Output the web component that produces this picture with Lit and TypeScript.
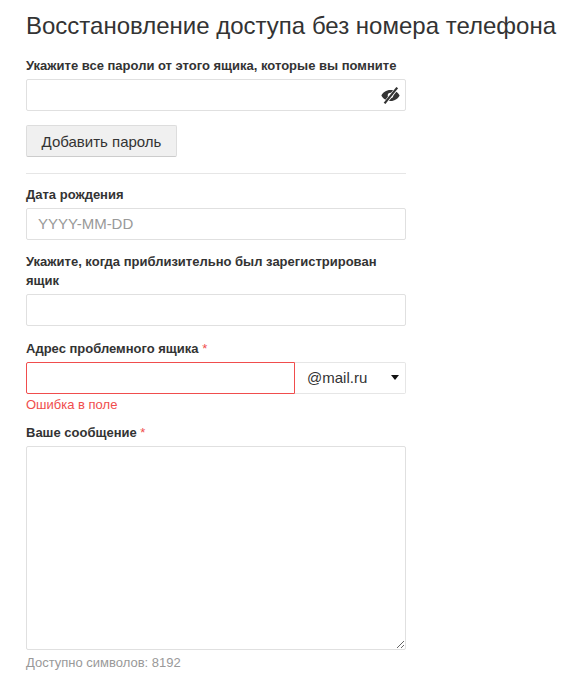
import { LitElement, html, css } from "lit";
import { customElement } from "lit/decorators.js";

@customElement("app-root")
export class AppRoot extends LitElement {
  static styles = css`
    :host { display: block; background: #fff; font-family: "Liberation Sans", Arial, sans-serif; color: #333; height: 679px; overflow: hidden; }
    .page { padding: 12px 0 0 26px; width: 380px; }
    h1 { margin: 0 0 16px; font-size: 24px; font-weight: 400; line-height: 28px; white-space: nowrap; color: #333; }
    label { display: block; font-size: 13px; font-weight: 700; line-height: 19px; color: #333; margin-bottom: 4px; }
    .req { color: #f04d4d; font-weight: 400; }
    .field { margin-bottom: 12px; }
    .field.tall { margin-bottom: 13px; }
    .box { display: block; box-sizing: border-box; width: 100%; height: 32px; border: 1px solid #e0e0e0; border-radius: 2px; background: #fff; font: 15px "Liberation Sans", Arial, sans-serif; padding: 0 11px 1px; color: #333; outline: none; margin: 0; }
    .box::placeholder { color: #999; opacity: 1; }
    .pw { position: relative; }
    .eye { position: absolute; right: 6px; top: 7px; width: 19px; height: 19px; }
    .btn { display: block; box-sizing: border-box; width: 151px; height: 32px; margin-top: 14px; border: 1px solid #ddd; border-bottom-color: #ccc; border-radius: 2px; background: #f0f0f0; font: 15px "Liberation Sans", Arial, sans-serif; color: #333; padding: 0; }
    hr { border: 0; border-top: 1px solid #e6e6e6; margin: 16px 0 11px; }
    .row { display: flex; }
    .row .box { flex: 1; min-width: 0; border-color: #f04d4d; border-radius: 2px 0 0 2px; }
    .select { box-sizing: border-box; width: 111px; height: 32px; flex: none; display: flex; align-items: center; justify-content: space-between; padding: 0 6px 1px 12px; border: 1px solid #e6e6e6; border-left: 0; border-radius: 0 2px 2px 0; font-size: 15px; color: #333; }
    .caret { width: 0; height: 0; border-left: 4.5px solid transparent; border-right: 4.5px solid transparent; border-top: 5px solid #111; }
    .error { font-size: 13px; line-height: 15px; color: #f04d4d; margin: 3px 0 11px; }
    textarea.box { height: 204px; padding: 8px 11px; resize: vertical; }
    .hint { font-size: 13px; line-height: 16px; color: #999; margin-top: 5px; }
  `;

  render() {
    return html`
      <div class="page">
        <h1>Восстановление доступа без номера телефона</h1>
        <label>Укажите все пароли от этого ящика, которые вы помните</label>
        <div class="pw">
          <input class="box" type="text" />
          <svg class="eye" viewBox="0 0 24 24" fill="#333">
            <path d="M12 5C6.500 5 2 8.300 0.500 12c1.500 3.700 6 7 11.500 7s10-3.300 11.500-7C22 8.300 17.500 5 12 5zm0 10.500a3.500 3.500 0 1 1 0-7 3.500 3.500 0 0 1 0 7z"/>
            <path d="M20.500 2.500 5 21.500" stroke="#fff" stroke-width="4.500"/>
            <path d="M20.500 2 4.500 22" stroke="#333" stroke-width="2.800"/>
          </svg>
        </div>
        <button class="btn">Добавить пароль</button>
        <hr />
        <div class="field">
          <label>Дата рождения</label>
          <input class="box" type="text" placeholder="YYYY-MM-DD" />
        </div>
        <div class="field tall">
          <label>Укажите, когда приблизительно был зарегистрирован ящик</label>
          <input class="box" type="text" />
        </div>
        <label>Адрес проблемного ящика <span class="req">*</span></label>
        <div class="row">
          <input class="box" type="text" />
          <div class="select"><span>@mail.ru</span><span class="caret"></span></div>
        </div>
        <div class="error">Ошибка в поле</div>
        <label>Ваше сообщение <span class="req">*</span></label>
        <textarea class="box"></textarea>
        <div class="hint">Доступно символов: 8192</div>
      </div>
    `;
  }
}
